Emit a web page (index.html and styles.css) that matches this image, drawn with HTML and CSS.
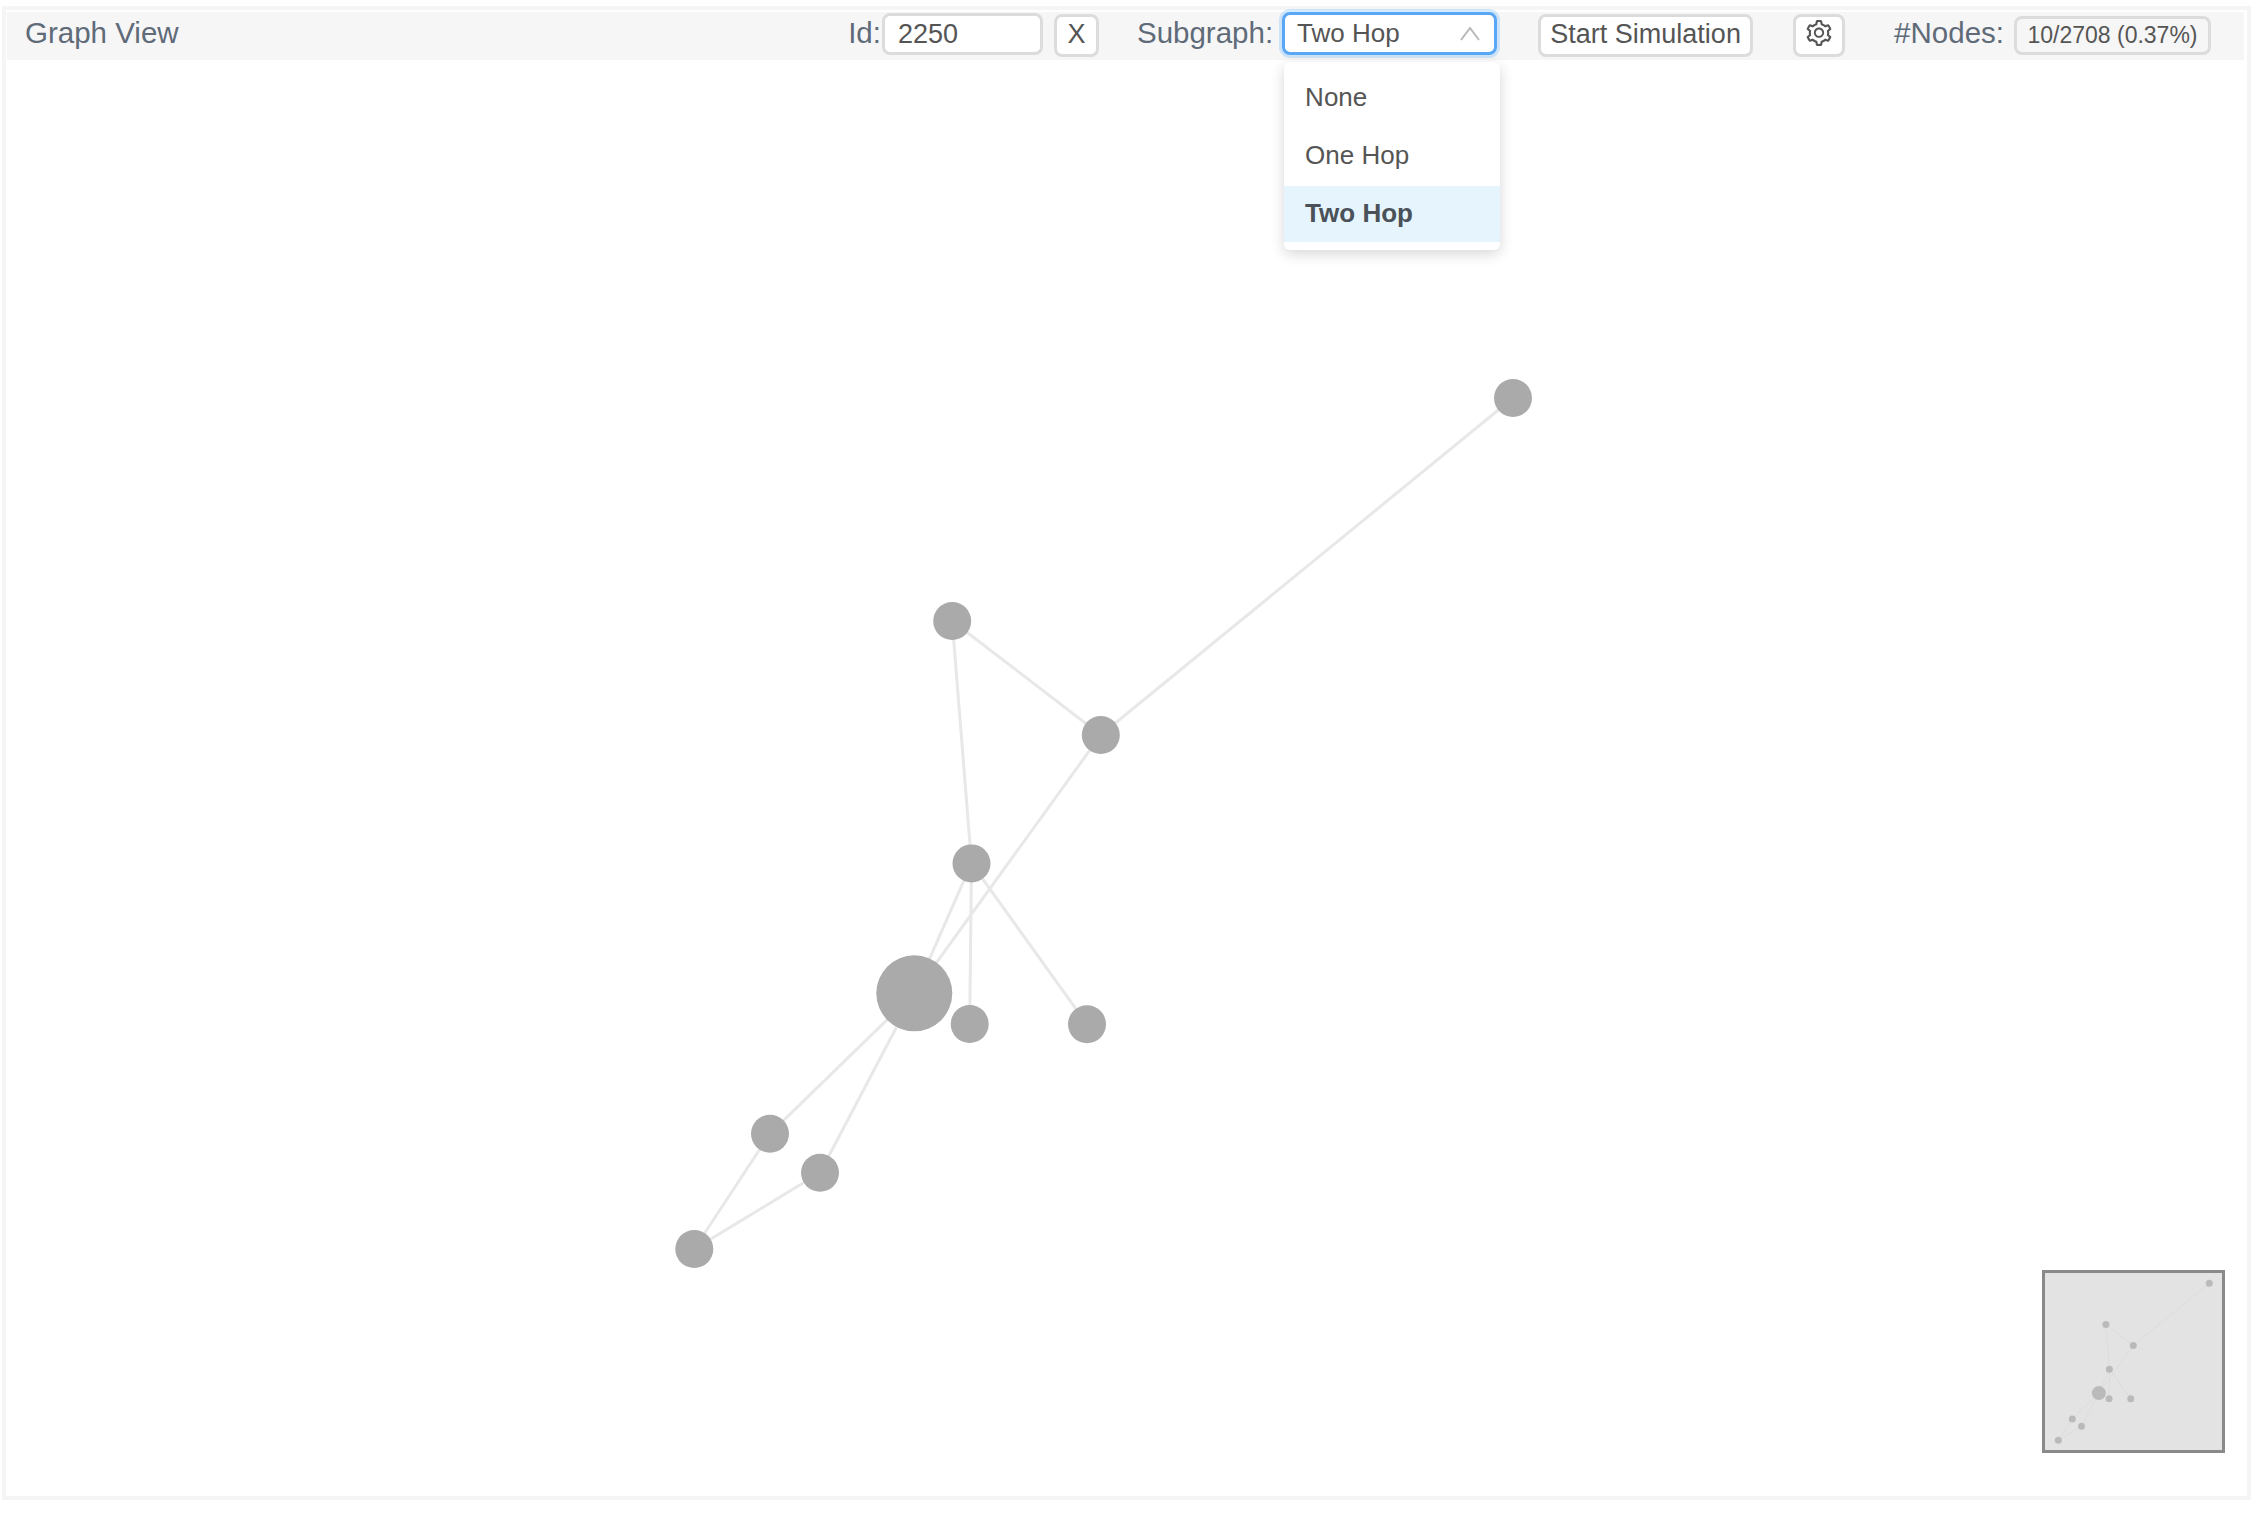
FILE: index.html
```html
<!DOCTYPE html>
<html lang="en">
<head>
    <meta charset="UTF-8">
    <title>Graph View</title>
    <link rel="stylesheet" href="styles.css">
</head>
<body>
<div class="frame">
    <div class="bar">
        <span class="label title">Graph View</span>
        <span class="label id-label">Id:</span>
        <input class="id-input" type="text" value="2250">
        <button class="btn clear-btn">X</button>
        <span class="label subgraph-label">Subgraph:</span>
        <div class="select">
            <span>Two Hop</span>
            <svg class="chevron" width="20" height="14" viewBox="0 0 20 14">
                <polyline points="1,13 10,1 19,13"></polyline>
            </svg>
            <ul class="menu">
                <li>None</li>
                <li>One Hop</li>
                <li class="active">Two Hop</li>
            </ul>
        </div>
        <button class="btn sim-btn">Start Simulation</button>
        <button class="btn gear-btn">
            <svg width="26" height="26" viewBox="64 64 896 896">
                <path d="M924.8 625.7l-65.5-56c3.1-19 4.7-38.4 4.7-57.8s-1.6-38.8-4.7-57.8l65.5-56a32.03 32.03 0 0 0 9.3-35.2l-.9-2.6a443.74 443.74 0 0 0-79.7-137.9l-1.8-2.1a32.12 32.12 0 0 0-35.1-9.5l-81.3 28.9c-30-24.6-63.5-44-99.7-57.6l-15.7-85a32.05 32.05 0 0 0-25.8-25.7l-2.7-.5c-52.1-9.4-106.9-9.4-159 0l-2.7.5a32.05 32.05 0 0 0-25.8 25.7l-15.8 85.4a351.86 351.86 0 0 0-99 57.4l-81.9-29.1a32 32 0 0 0-35.1 9.5l-1.8 2.1a446.02 446.02 0 0 0-79.7 137.9l-.9 2.6c-4.5 12.5-.8 26.5 9.3 35.2l66.3 56.6c-3.1 18.8-4.6 38-4.6 57.1 0 19.2 1.5 38.4 4.6 57.1L99 625.5a32.03 32.03 0 0 0-9.3 35.2l.9 2.6c18.1 50.4 44.9 96.9 79.7 137.9l1.8 2.1a32.12 32.12 0 0 0 35.1 9.5l81.9-29.1c29.8 24.5 63.1 43.9 99 57.4l15.8 85.4a32.05 32.05 0 0 0 25.8 25.7l2.7.5a449.4 449.4 0 0 0 159 0l2.7-.5a32.05 32.05 0 0 0 25.8-25.7l15.7-85a350 350 0 0 0 99.7-57.6l81.3 28.9a32 32 0 0 0 35.1-9.5l1.8-2.1c34.8-41.1 61.6-87.5 79.7-137.9l.9-2.6c4.5-12.3.8-26.3-9.3-35zM788.3 465.9c2.5 15.1 3.8 30.6 3.8 46.1s-1.3 31-3.8 46.1l-6.6 40.1 74.7 63.9a370.03 370.03 0 0 1-42.6 73.6L721 702.8l-31.4 25.8c-23.9 19.6-50.5 35-79.3 45.8l-38.1 14.3-17.9 97a377.5 377.5 0 0 1-85 0l-17.9-97.2-37.8-14.5c-28.5-10.8-55-26.2-78.7-45.7l-31.4-25.9-93.4 33.2c-17-22.9-31.2-47.6-42.6-73.6l75.5-64.5-6.5-40c-2.4-14.9-3.7-30.3-3.7-45.5 0-15.3 1.2-30.6 3.7-45.5l6.5-40-75.5-64.5c11.3-26.1 25.6-50.7 42.6-73.6l93.4 33.2 31.4-25.9c23.7-19.5 50.2-34.9 78.7-45.7l37.9-14.3 17.9-97.2c28.1-3.2 56.8-3.2 85 0l17.9 97 38.1 14.3c28.7 10.8 55.4 26.2 79.3 45.8l31.4 25.8 92.8-32.9c17 22.9 31.2 47.6 42.6 73.6L781.8 426l6.5 39.9zM512 326c-97.2 0-176 78.8-176 176s78.8 176 176 176 176-78.8 176-176-78.8-176-176-176zm79.2 255.2A111.6 111.6 0 0 1 512 614c-29.9 0-58-11.7-79.2-32.8A111.6 111.6 0 0 1 400 502c0-29.9 11.7-58 32.8-79.2C454 401.6 482.1 390 512 390c29.9 0 58 11.6 79.2 32.8A111.6 111.6 0 0 1 624 502c0 29.9-11.7 58-32.8 79.2z"></path>
            </svg>
        </button>
        <span class="label nodes-label">#Nodes:</span>
        <span class="tag">10/2708 (0.37%)</span>
    </div>

    <div class="graph">
        <svg class="canvas" viewBox="7 60 2237 1436">
            <g id="net">
                <g class="edges">
                    <line x1="1513" y1="398" x2="1100.8" y2="735"></line>
                    <line x1="952.2" y1="621" x2="1100.8" y2="735"></line>
                    <line x1="952.2" y1="621" x2="971.5" y2="863.4"></line>
                    <line x1="1100.8" y1="735" x2="914.3" y2="993.3"></line>
                    <line x1="971.5" y1="863.4" x2="914.3" y2="993.3"></line>
                    <line x1="971.5" y1="863.4" x2="969.7" y2="1024"></line>
                    <line x1="971.5" y1="863.4" x2="1087" y2="1024.3"></line>
                    <line x1="914.3" y1="993.3" x2="770" y2="1133.7"></line>
                    <line x1="914.3" y1="993.3" x2="820" y2="1172.7"></line>
                    <line x1="770" y1="1133.7" x2="694.3" y2="1249"></line>
                    <line x1="820" y1="1172.7" x2="694.3" y2="1249"></line>
                </g>
                <g class="nodes">
                    <circle cx="1513" cy="398" r="19"></circle>
                    <circle cx="952.2" cy="621" r="19"></circle>
                    <circle cx="1100.8" cy="735" r="19"></circle>
                    <circle cx="971.5" cy="863.4" r="19"></circle>
                    <circle cx="914.3" cy="993.3" r="38"></circle>
                    <circle cx="969.7" cy="1024" r="19"></circle>
                    <circle cx="1087" cy="1024.3" r="19"></circle>
                    <circle cx="770" cy="1133.7" r="19"></circle>
                    <circle cx="820" cy="1172.7" r="19"></circle>
                    <circle cx="694.3" cy="1249" r="19"></circle>
                </g>
            </g>
        </svg>
        <div class="minimap">
            <svg class="mini-net" viewBox="622 342 960 960">
                <use href="#net"></use>
            </svg>
        </div>
    </div>
</div>
</body>
</html>
```

FILE: styles.css
```css
*{
    margin: 0;
    padding: 0;
    box-sizing: border-box;
}
body{
    background: #ffffff;
    font-family: "Liberation Sans", Arial, sans-serif;
}
.frame{
    display: flex;
    flex-direction: column;
    width: 2249px;
    height: 1494px;
    margin: 6px 0 0 2px;
    padding: 2px 3px 0 1px;
    border: 4px solid #f5f5f5;
}
.bar{
    display: flex;
    align-items: flex-start;
    flex: none;
    height: 48px;
    padding: 0 33px 0 18px;
    background: #f6f6f6;
}
.label{
    font-size: 29.5px;
    line-height: 42px;
    color: #5f6b78;
    white-space: nowrap;
}
.id-label{
    margin-left: auto;
    margin-right: 1px;
}
.id-input{
    width: 161px;
    height: 42px;
    margin-top: 1px;
    padding-left: 13px;
    border: 3px solid #dcdcdc;
    border-radius: 8px;
    background: #ffffff;
    font: 27px "Liberation Sans", Arial, sans-serif;
    color: #555555;
    outline: none;
}
.btn{
    display: flex;
    align-items: center;
    justify-content: center;
    height: 43px;
    margin-top: 2px;
    padding-bottom: 2px;
    border: 3px solid #dcdcdc;
    border-radius: 8px;
    background: #ffffff;
    font: 27px "Liberation Sans", Arial, sans-serif;
    color: #555555;
}
.clear-btn{
    width: 45px;
    margin-left: 11px;
}
.subgraph-label{
    margin-left: 38px;
    margin-right: 9px;
}
.select{
    position: relative;
    display: flex;
    align-items: center;
    justify-content: space-between;
    width: 215px;
    height: 43px;
    padding: 0 14px 0 12px;
    border: 3px solid #5aa7f5;
    border-radius: 8px;
    background: #ffffff;
    box-shadow: 0 0 0 3px rgba(24, 144, 255, 0.18);
    font-size: 26px;
    color: #555555;
}
.chevron polyline{
    fill: none;
    stroke: #b8b8b8;
    stroke-width: 2;
}
.menu{
    position: absolute;
    top: 47px;
    left: -1px;
    width: 216px;
    padding: 8px 0;
    border-radius: 6px;
    background: #ffffff;
    box-shadow: 0 4px 14px rgba(0, 0, 0, 0.16);
    list-style: none;
    z-index: 2;
}
.menu li{
    height: 56px;
    padding-left: 21px;
    font-size: 26px;
    line-height: 54px;
    color: #555555;
}
.menu li + li{
    margin-top: 2px;
}
.menu .active{
    background: #e6f4fe;
    font-weight: bold;
    color: #4a5158;
}
.sim-btn{
    width: 215px;
    margin-left: 41px;
}
.gear-btn{
    width: 52px;
    margin-left: 40px;
    padding-bottom: 5px;
}
.gear-btn path{
    fill: #555555;
}
.nodes-label{
    margin-left: 49px;
    margin-right: 10px;
}
.tag{
    width: 197px;
    height: 39px;
    margin-top: 4px;
    border: 3px solid #dcdcdc;
    border-radius: 8px;
    font-size: 23px;
    line-height: 33px;
    text-align: center;
    color: #555555;
    white-space: nowrap;
}
.graph{
    position: relative;
    flex: 1;
    min-height: 0;
}
.canvas{
    display: block;
    width: 100%;
    height: 100%;
}
.edges line{
    stroke: var(--edge, #e8e8e8);
    stroke-width: 3;
}
.nodes circle{
    fill: #aaaaaa;
}
.minimap{
    position: absolute;
    right: 19px;
    bottom: 43px;
    width: 183px;
    height: 183px;
    border: 3px solid #8a8a8a;
    background: #e3e3e3;
}
.mini-net{
    --edge: #d2d2d2;
    display: block;
    width: 100%;
    height: 100%;
    opacity: 0.7;
    filter: blur(0.7px);
}
```
